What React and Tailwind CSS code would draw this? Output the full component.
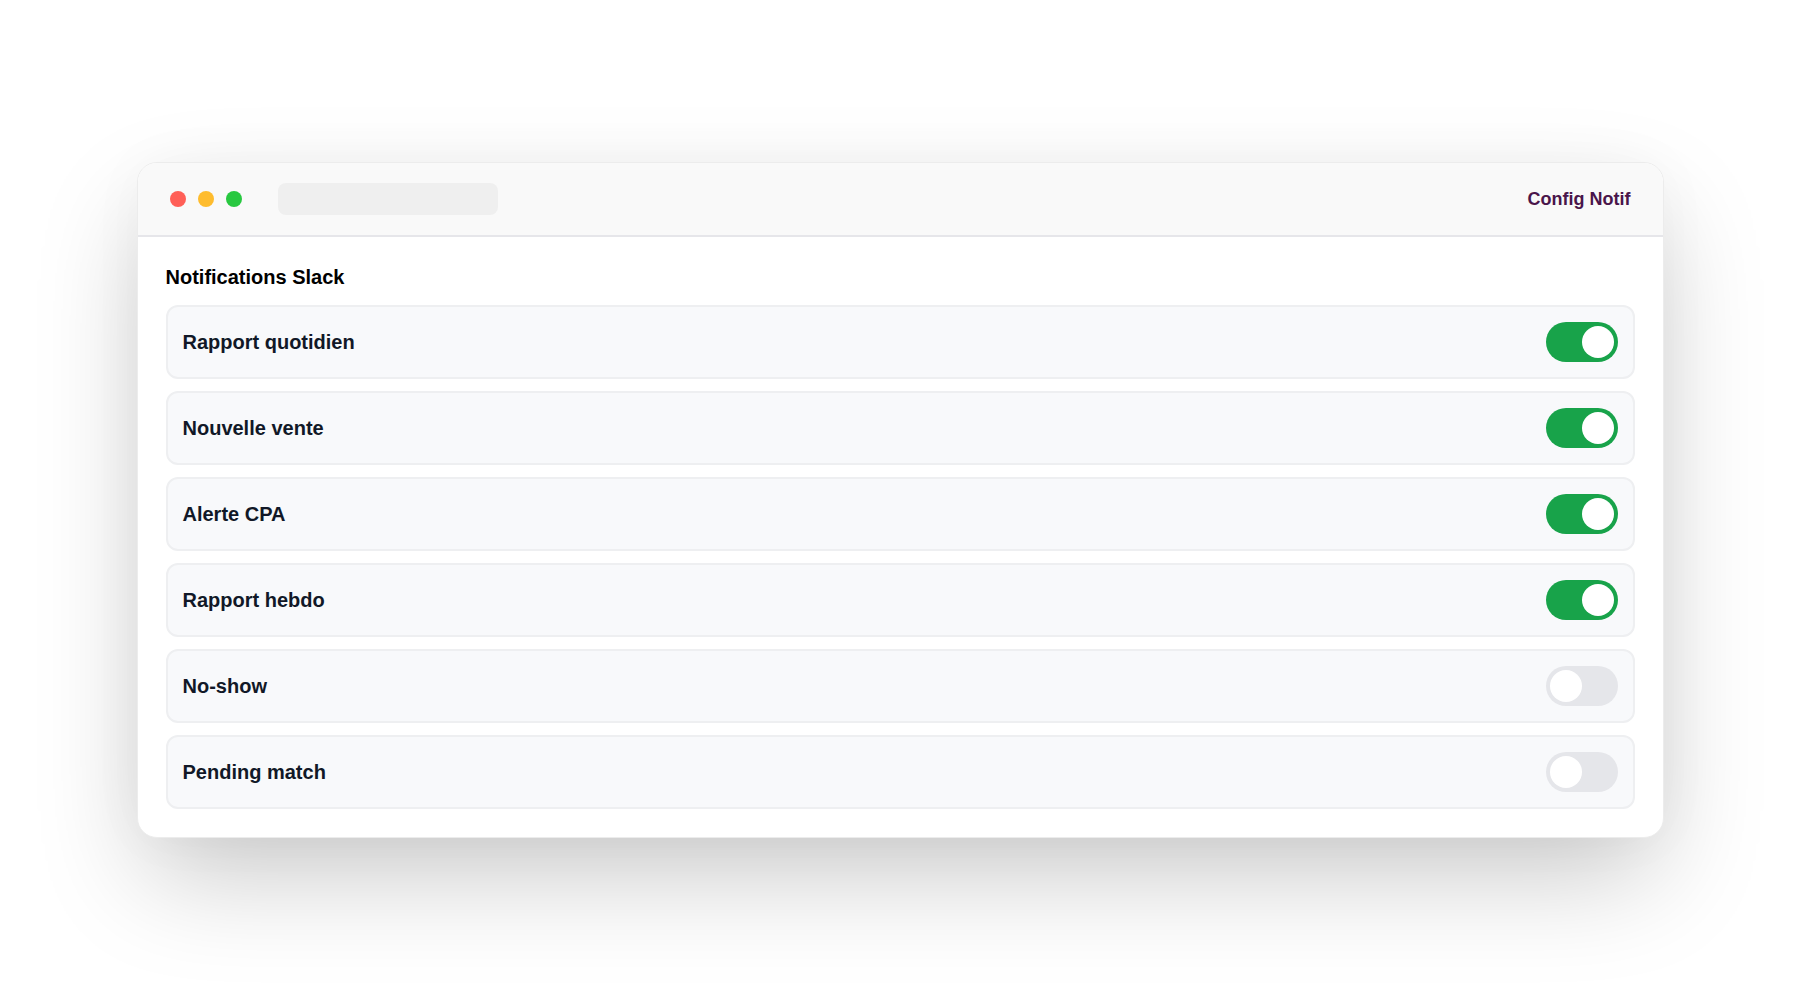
import { useState } from "react";

const initialItems = [
  { label: "Rapport quotidien", on: true },
  { label: "Nouvelle vente", on: true },
  { label: "Alerte CPA", on: true },
  { label: "Rapport hebdo", on: true },
  { label: "No-show", on: false },
  { label: "Pending match", on: false },
];

function Toggle({ on, onClick }) {
  return (
    <button
      type="button"
      onClick={onClick}
      className={
        "flex h-10 w-[72px] items-center rounded-full p-1 " +
        (on ? "justify-end bg-[#18a34a]" : "justify-start bg-[#e5e6ea]")
      }
    >
      <span className="block h-8 w-8 rounded-full bg-white" />
    </button>
  );
}

export default function App() {
  const [items, setItems] = useState(initialItems);

  const flip = (i) => {
    setItems(items.map((it, idx) => (idx === i ? { ...it, on: !it.on } : it)));
  };

  return (
    <div
      className="flex h-screen w-full items-center justify-center bg-white"
      style={{ fontFamily: "'Liberation Sans', Arial, sans-serif" }}
    >
      <div className="w-[1527px] overflow-hidden rounded-[20px] border border-[#ececec] bg-white shadow-[0_45px_110px_-10px_rgba(0,0,0,0.22),0_0_60px_rgba(0,0,0,0.03)]">
        {/* title bar */}
        <div className="flex h-[74px] items-center border-b-2 border-[#e6e6ea] bg-[#f9f9f9] px-8">
          <div className="flex gap-3">
            <span className="h-4 w-4 rounded-full bg-[#ff5f57]" />
            <span className="h-4 w-4 rounded-full bg-[#febc2e]" />
            <span className="h-4 w-4 rounded-full bg-[#28c840]" />
          </div>
          <div className="ml-9 h-8 w-[220px] rounded-lg bg-[#efefef]" />
          <div className="ml-auto text-[18px] font-bold text-[#4a154b]">Config Notif</div>
        </div>

        {/* content */}
        <div className="px-7 pb-7 pt-[26px]">
          <h2 className="mb-[14px] text-[20px] font-bold leading-7 text-black">Notifications Slack</h2>
          <div className="flex flex-col gap-3">
            {items.map((it, i) => (
              <div
                key={it.label}
                className="flex h-[74px] items-center justify-between rounded-xl border-2 border-[#eeeff1] bg-[#f8f9fb] px-[15px]"
              >
                <span className="text-[20px] font-bold text-[#111827]">{it.label}</span>
                <Toggle on={it.on} onClick={() => flip(i)} />
              </div>
            ))}
          </div>
        </div>
      </div>
    </div>
  );
}
